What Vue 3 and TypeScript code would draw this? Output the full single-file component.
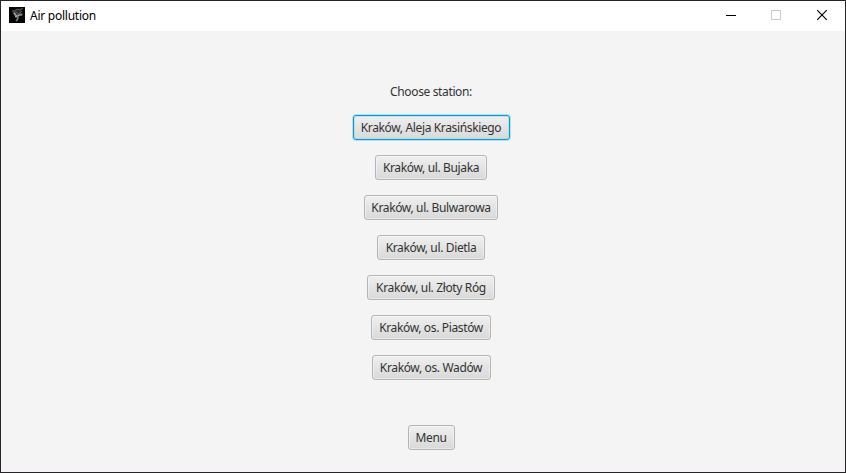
<script setup lang="ts">
import { ref } from 'vue'

interface Station {
  name: string
  width: number
}

const stations: Station[] = [
  { name: 'Kraków, Aleja Krasińskiego', width: 157 },
  { name: 'Kraków, ul. Bujaka', width: 112 },
  { name: 'Kraków, ul. Bulwarowa', width: 134 },
  { name: 'Kraków, ul. Dietla', width: 108 },
  { name: 'Kraków, ul. Złoty Róg', width: 128 },
  { name: 'Kraków, os. Piastów', width: 120 },
  { name: 'Kraków, os. Wadów', width: 119 },
]

const selected = ref(0)
</script>

<template>
  <div class="window">
    <header class="titlebar">
      <svg class="app-icon" width="16" height="16" viewBox="0 0 16 16">
        <rect width="16" height="16" fill="#050505" />
        <path d="M4 3l5-1 5-1-2 4 2 3-5 2-4-1-2-4z" fill="#2b2b2b" />
        <path d="M3 4l3 0 2-2 3 1 3-2M4 6l3-1 3 2 3-3M5 8l2 1 3-2 4 0" fill="none" stroke="#5a5a5a" stroke-width="1" />
        <path d="M5 6l2 2 1 2 2-2 3 0M8 9l-2 1" fill="none" stroke="#b5b5b5" stroke-width="1.2" />
        <path d="M8 9l1 2-1 2-1 1" fill="none" stroke="#858585" stroke-width="1.5" />
      </svg>
      <span class="title">Air pollution</span>
      <div class="controls">
        <svg width="46" height="30" viewBox="0 0 46 30" shape-rendering="crispEdges">
          <rect x="19" y="14" width="10" height="1" fill="#000" />
        </svg>
        <svg width="46" height="30" viewBox="0 0 46 30" shape-rendering="crispEdges">
          <rect x="18.5" y="9.5" width="9" height="9" fill="none" stroke="#ccc" />
        </svg>
        <svg width="46" height="30" viewBox="0 0 46 30">
          <path d="M18.2 9.2l9.6 9.6M27.8 9.2l-9.6 9.6" fill="none" stroke="#000" stroke-width="1.15" />
        </svg>
      </div>
    </header>
    <main class="content">
      <div class="label">Choose station:</div>
      <div class="stations">
        <button
          v-for="(s, i) in stations"
          :key="s.name"
          class="btn"
          :class="{ focused: i === selected }"
          :style="{ width: s.width + 'px' }"
          @click="selected = i"
        >{{ s.name }}</button>
      </div>
      <button class="btn menu">Menu</button>
    </main>
  </div>
</template>

<style>
body {
  margin: 0;
  overflow: hidden;
}
</style>

<style scoped>
.window {
  box-sizing: border-box;
  width: 846px;
  height: 473px;
  border: 1px solid #262427;
  background: #f4f4f4;
  font-family: "Noto Sans", "Open Sans", sans-serif;
  font-size: 12px;
  letter-spacing: -0.36px;
  display: flex;
  flex-direction: column;
}
.titlebar {
  height: 30px;
  flex: none;
  display: flex;
  align-items: center;
  background: #fff;
  padding-left: 8px;
}
.app-icon {
  flex: none;
  margin-right: 5px;
  margin-top: -2px;
}
.title {
  color: #000;
  line-height: 16px;
  letter-spacing: -0.25px;
}
.controls {
  margin-left: auto;
  display: flex;
}
.controls svg {
  display: block;
}
.content {
  display: flex;
  flex-direction: column;
  align-items: center;
  padding: 53px 0 0 16px;
  color: #333;
}
.label {
  line-height: 16px;
}
.stations {
  margin-top: 15px;
  display: flex;
  flex-direction: column;
  align-items: center;
  gap: 15px;
}
.btn {
  box-sizing: border-box;
  height: 25px;
  padding: 1px 0 0;
  border: 1px solid #b5b5b5;
  border-radius: 3px;
  background: linear-gradient(#efefef, #d9d9d9);
  box-shadow: inset 0 0 0 1px rgba(255, 255, 255, 0.4);
  color: #333;
  font: inherit;
  letter-spacing: inherit;
  line-height: 22px;
  white-space: nowrap;
  outline: none;
}
.btn.focused {
  border-color: #039ed3;
  box-shadow: 0 0 0 1px #b5dfee, inset 0 0 0 1px rgba(160, 215, 235, 0.6);
}
.menu {
  width: 47px;
  margin-top: 45px;
}
</style>
